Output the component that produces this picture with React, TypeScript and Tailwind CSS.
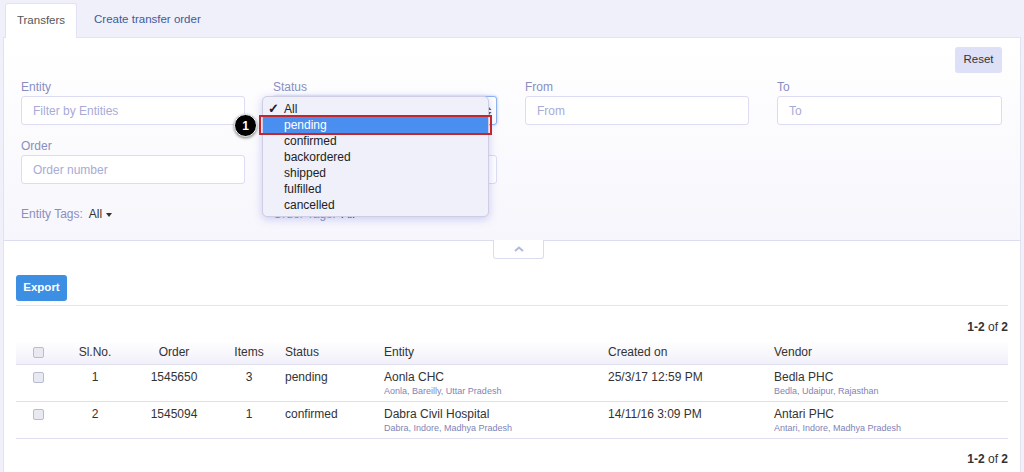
import React from 'react';

const rows = [
  {
    no: 1,
    order: '1545650',
    items: 3,
    status: 'pending',
    entity: 'Aonla CHC',
    entitySub: 'Aonla, Bareilly, Uttar Pradesh',
    created: '25/3/17 12:59 PM',
    vendor: 'Bedla PHC',
    vendorSub: 'Bedla, Udaipur, Rajasthan',
  },
  {
    no: 2,
    order: '1545094',
    items: 1,
    status: 'confirmed',
    entity: 'Dabra Civil Hospital',
    entitySub: 'Dabra, Indore, Madhya Pradesh',
    created: '14/11/16 3:09 PM',
    vendor: 'Antari PHC',
    vendorSub: 'Antari, Indore, Madhya Pradesh',
  },
];

const options = ['pending', 'confirmed', 'backordered', 'shipped', 'fulfilled', 'cancelled'];

const cols = 'grid grid-cols-[44px_70px_88px_62px_99px_224px_166px_1fr]';

const Caret = () => (
  <span className="ml-[4px] inline-block h-0 w-0 border-x-[3px] border-t-[4px] border-x-transparent border-t-[#333] align-middle" />
);

const Checkbox = () => (
  <span className="block h-[11px] w-[11px] rounded-[2px] border border-[#b9bbd3] bg-[#e9e9f2]" />
);

const Field = ({ label, placeholder }: { label: string; placeholder: string }) => (
  <div className="flex flex-col">
    <label className="h-[17px] text-[12px] leading-[17px] text-[#8a8ebf]">{label}</label>
    <div className="flex h-[29px] items-center rounded-[3px] border border-[#dcdcf2] bg-white px-[11px] text-[12px] text-[#a7abd6]">
      {placeholder}
    </div>
  </div>
);

export default function App() {
  return (
    <div className="relative h-[472px] w-[1024px] overflow-hidden bg-[#f0f0fa] font-['Liberation_Sans',Arial,sans-serif] text-[#333]">
      {/* tabs */}
      <div className="flex h-[37px] items-end pl-[5px]">
        <div className="relative z-10 -mb-px flex h-[35px] w-[72px] items-center justify-center rounded-t-[3px] border border-b-0 border-[#e2e2f2] bg-white text-[11.5px] text-[#555]">
          Transfers
        </div>
        <div className="flex h-[34px] items-center pl-[17px] text-[11.5px] text-[#3d5a9c]">Create transfer order</div>
      </div>

      {/* panel */}
      <div className="mx-[3px] h-[440px] border border-[#e2e2f2] bg-white">
        {/* filters */}
        <div className="relative h-[203px] border-b border-[#dcdcf0] bg-gradient-to-b from-white to-[#f7f6fc] px-[17px] pt-[9px]">
          <div className="flex justify-end pr-[1px]">
            <button className="h-[26px] w-[47px] rounded-[3px] bg-[#dde0f6] text-[11.5px] text-[#333]">Reset</button>
          </div>
          <div className="mt-[6px] grid grid-cols-[224px_224px_224px_225px] gap-x-[28px]">
            <Field label="Entity" placeholder="Filter by Entities" />
            <div className="flex flex-col">
              <label className="h-[17px] text-[12px] leading-[17px] text-[#8a8ebf]">Status</label>
              <div className="flex h-[29px] items-center justify-end rounded-[3px] border border-[#8fb2ef] bg-white pr-[4px] shadow-[0_0_3px_#a9c4f4]">
                <svg width="6" height="10" viewBox="0 0 6 10">
                  <path d="M3 1 L5.5 4 H0.5 Z M3 9 L5.5 6 H0.5 Z" fill="#555" />
                </svg>
              </div>
            </div>
            <Field label="From" placeholder="From" />
            <Field label="To" placeholder="To" />
          </div>
          <div className="mt-[13px] grid grid-cols-[224px_224px] gap-x-[28px]">
            <Field label="Order" placeholder="Order number" />
            <Field label="" placeholder="" />
          </div>
          <div className="mt-[23px] grid grid-cols-[224px_224px] gap-x-[28px] text-[12px] leading-[14px]">
            <div>
              <span className="text-[#8a8ebf]">Entity Tags:</span>
              <span className="ml-[6px] text-[#333]">All</span>
              <Caret />
            </div>
            <div>
              <span className="text-[#8a8ebf]">Order Tags:</span>
              <span className="ml-[6px] text-[#333]">All</span>
              <Caret />
            </div>
          </div>

          {/* collapse handle */}
          <div className="absolute left-[489px] top-[202px] flex h-[19px] w-[51px] items-center justify-center rounded-b-[3px] border border-t-0 border-[#dcdcf0] bg-white">
            <svg width="10" height="6" viewBox="0 0 10 6">
              <path d="M1 5 L5 1.5 L9 5" fill="none" stroke="#b4b7dc" strokeWidth="2" />
            </svg>
          </div>
        </div>

        {/* results */}
        <div className="px-[12px] pt-[33px]">
          <button className="h-[26px] w-[51px] rounded-[3px] bg-[#3d8fe3] text-[11.5px] font-bold text-white">Export</button>
          <div className="mt-[4px] border-t border-[#e4e4f4]" />
          <div className="mt-[14px] text-right text-[12px] leading-[14px]">
            <b>1-2</b> of <b>2</b>
          </div>
          <div className={`${cols} mt-[7px] h-[24px] items-center border-b border-[#dfdff0] bg-gradient-to-b from-white to-[#f1f0fa] text-[12px]`}>
            <div className="flex justify-center pl-[1px]">
              <Checkbox />
            </div>
            <div className="text-center">Sl.No.</div>
            <div className="text-center">Order</div>
            <div className="text-center">Items</div>
            <div className="pl-[5px]">Status</div>
            <div className="pl-[5px]">Entity</div>
            <div className="pl-[5px]">Created on</div>
            <div className="pl-[5px]">Vendor</div>
          </div>
          {rows.map((r) => (
            <div key={r.no} className={`${cols} h-[37px] border-b border-[#dfdff0] pt-[5px] text-[12px] leading-[14px]`}>
              <div className="flex justify-center pl-[1px] pt-[2px]">
                <Checkbox />
              </div>
              <div className="text-center">{r.no}</div>
              <div className="text-center">{r.order}</div>
              <div className="text-center">{r.items}</div>
              <div className="pl-[5px]">{r.status}</div>
              <div className="pl-[5px]">
                <div>{r.entity}</div>
                <div className="text-[9px] leading-[14px] text-[#7f84b8]">{r.entitySub}</div>
              </div>
              <div className="pl-[5px]">{r.created}</div>
              <div className="pl-[5px]">
                <div>{r.vendor}</div>
                <div className="text-[9px] leading-[14px] text-[#7f84b8]">{r.vendorSub}</div>
              </div>
            </div>
          ))}
          <div className="mt-[13px] text-right text-[12px] leading-[14px]">
            <b>1-2</b> of <b>2</b>
          </div>
        </div>
      </div>

      {/* open status dropdown */}
      <div className="absolute left-[262px] top-[96px] w-[227px] rounded-[5px] border border-[#cdcde3] bg-[#f0f0fa] pb-[3px] pt-[4px] text-[12px] leading-[16px] text-[#222] shadow-[0_2px_8px_rgba(110,120,220,0.35)]">
        <div className="flex h-[16px] items-center">
          <span className="w-[21px] pl-[5px] text-[13px] font-bold">✓</span>
          <span>All</span>
        </div>
        {options.map((o, i) => (
          <div
            key={o}
            className={`flex h-[16px] items-center pl-[21px] ${i === 0 ? 'bg-[#4a8ff0] text-white' : ''}`}
          >
            {o}
          </div>
        ))}
      </div>

      {/* highlight callout */}
      <div className="absolute left-[259px] top-[115px] h-[20px] w-[233px] border-2 border-[#c3272d]" />
      <div className="absolute left-[234px] top-[114px] flex h-[23px] w-[23px] items-center justify-center rounded-full border border-white bg-black text-[12px] font-bold text-white shadow-[0_1px_3px_rgba(0,0,0,0.5)]">
        1
      </div>
    </div>
  );
}
